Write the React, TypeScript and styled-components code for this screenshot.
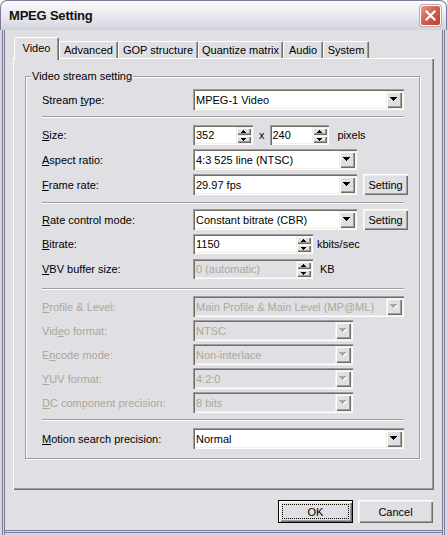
import React from "react";
import styled, { createGlobalStyle } from "styled-components";

const colors = {
    face: "#e0dfe3",
    light: "#f1efe2",
    hilight: "#ffffff",
    shadow: "#9d9da1",
    dkShadow: "#716f64",
    grayText: "#aca899",
    frameDark: "#7b7b98",
    frameLight: "#d6d6e2",
};

const GlobalStyle = createGlobalStyle`
    html, body {
        margin: 0;
        padding: 0;
        background: #ffffff;
    }
    body {
        font-family: "Liberation Sans", Arial, sans-serif;
        font-size: 11px;
        color: #000;
    }
`;

const Window = styled.div`
    width: 447px;
    height: 535px;
    display: flex;
    flex-direction: column;
`;

const TitleBar = styled.div`
    flex: 0 0 30px;
    display: flex;
    align-items: center;
    justify-content: space-between;
    box-sizing: border-box;
    padding: 0 5px 0 8px;
    border-radius: 7px 7px 0 0;
    border: 1px solid ${colors.frameDark};
    border-bottom: none;
    background: linear-gradient(#fcfcfd 0%, #eeeef3 35%, #e1e1e9 70%, #d2d2dd 100%);
`;

const Title = styled.span`
    font-size: 13px;
    font-weight: bold;
    color: #111;
    letter-spacing: -0.2px;
`;

const CloseButton = styled.div`
    width: 21px;
    height: 21px;
    box-sizing: border-box;
    display: flex;
    align-items: center;
    justify-content: center;
    border: 1px solid #fff;
    border-radius: 3px;
    background: linear-gradient(135deg, #e99a8c 0%, #d4604f 45%, #bf3f2f 100%);
    box-shadow: 0 0 0 1px #b7a9b8;
`;

const Client = styled.div`
    flex: 1 1 auto;
    display: flex;
    flex-direction: column;
    padding: 7px 13px 0 13px;
    background: ${colors.face};
    box-shadow:
        inset 2px 0 ${colors.frameLight},
        inset 3px 0 ${colors.frameDark},
        inset 4px 0 ${colors.frameLight},
        inset 5px 0 ${colors.frameDark},
        inset -2px 0 ${colors.frameLight},
        inset -3px 0 ${colors.frameDark},
        inset -4px 0 ${colors.frameLight},
        inset -5px 0 ${colors.frameDark},
        inset 0 -2px ${colors.frameLight},
        inset 0 -3px ${colors.frameDark},
        inset 0 -4px ${colors.frameLight},
        inset 0 -5px ${colors.frameDark};
`;

const TabStrip = styled.div`
    display: flex;
    align-items: flex-end;
    height: 21px;
    padding-left: 1px;
`;

const Tab = styled.div<{ $active?: boolean; $w: number }>`
    position: relative;
    z-index: ${props => (props.$active ? 1 : 0)};
    box-sizing: border-box;
    width: ${props => props.$w}px;
    height: ${props => (props.$active ? 23 : 17)}px;
    margin-bottom: ${props => (props.$active ? -2 : 0)}px;
    display: flex;
    align-items: center;
    justify-content: center;
    padding-bottom: ${props => (props.$active ? 2 : 0)}px;
    background: ${colors.face};
    border-top: 1px solid ${colors.hilight};
    border-left: 1px solid ${colors.hilight};
    border-right: 1px solid ${colors.dkShadow};
    border-radius: 2px 2px 0 0;
    box-shadow: inset -1px 0 ${colors.shadow};
`;

const Panel = styled.div`
    box-sizing: border-box;
    width: 421px;
    height: 432px;
    padding: 18px 14px 0 12px;
    box-shadow:
        inset 1px 1px ${colors.hilight},
        inset -1px -1px ${colors.dkShadow},
        inset -2px -2px ${colors.shadow};
`;

const GroupBox = styled.div`
    display: flex;
    flex-direction: column;
    align-items: flex-start;
    padding: 0 0 9px 16px;
    border: 1px solid ${colors.shadow};
    box-shadow: inset 1px 1px ${colors.hilight}, 1px 1px ${colors.hilight};
`;

const GroupTitle = styled.span`
    margin: -7px 0 0 -11px;
    padding: 0 1px;
    line-height: 13px;
    background: ${colors.face};
`;

const Row = styled.div<{ $mt: number; $h?: number }>`
    display: flex;
    align-items: center;
    height: ${props => props.$h ?? 21}px;
    margin-top: ${props => props.$mt}px;
`;

const Label = styled.span<{ $disabled?: boolean }>`
    flex: 0 0 151px;
    color: ${props => (props.$disabled ? colors.grayText : "#000")};
    white-space: nowrap;
`;

const Separator = styled.div<{ $mt: number }>`
    width: 362px;
    height: 1px;
    margin-top: ${props => props.$mt}px;
    background: ${colors.shadow};
    border-bottom: 1px solid ${colors.hilight};
`;

const Sunken = styled.div<{ $w: number; $h?: number; $disabled?: boolean }>`
    box-sizing: border-box;
    width: ${props => props.$w}px;
    height: ${props => props.$h ?? 21}px;
    display: flex;
    align-items: stretch;
    padding: 2px;
    background: ${props => (props.$disabled ? colors.face : "#fff")};
    box-shadow:
        inset 1px 1px ${colors.shadow},
        inset 2px 2px ${colors.dkShadow},
        inset -1px -1px ${colors.hilight},
        inset -2px -2px ${colors.light};
`;

const FieldText = styled.span<{ $disabled?: boolean }>`
    flex: 1 1 auto;
    display: flex;
    align-items: center;
    padding-left: 1px;
    color: ${props => (props.$disabled ? colors.grayText : "#000")};
    white-space: nowrap;
    overflow: hidden;
`;

const Raised = styled.div<{ $w: number }>`
    flex: 0 0 ${props => props.$w}px;
    display: flex;
    align-items: center;
    justify-content: center;
    background: ${colors.face};
    box-shadow:
        inset 1px 1px ${colors.light},
        inset 2px 2px ${colors.hilight},
        inset -1px -1px ${colors.dkShadow},
        inset -2px -2px ${colors.shadow};
`;

const SpinColumn = styled.div`
    flex: 0 0 15px;
    display: flex;
    flex-direction: column;

    & > div {
        flex: 1 1 0;
    }
`;

const Unit = styled.span<{ $ml: number }>`
    margin-left: ${props => props.$ml}px;
`;

const PushButton = styled.div<{ $w: number; $h: number; $default?: boolean }>`
    box-sizing: border-box;
    width: ${props => props.$w}px;
    height: ${props => props.$h}px;
    display: flex;
    align-items: center;
    justify-content: center;
    background: ${colors.face};
    border: ${props => (props.$default ? "1px solid #000" : "none")};
    box-shadow:
        inset 1px 1px ${colors.hilight},
        inset 2px 2px ${colors.light},
        inset -1px -1px ${colors.dkShadow},
        inset -2px -2px ${colors.shadow};
`;

const FocusRect = styled.span`
    box-sizing: border-box;
    flex: 1 1 auto;
    align-self: stretch;
    margin: 3px;
    display: flex;
    align-items: center;
    justify-content: center;
    outline: 1px dotted #000;
    outline-offset: -1px;
`;

const ButtonRow = styled.div`
    display: flex;
    justify-content: flex-end;
    gap: 5px;
    width: 421px;
    margin-top: 10px;
    padding-right: 1px;
    box-sizing: border-box;
`;

const DropArrow = ({ disabled }: { disabled?: boolean }) => (
    <svg width="8" height="5" viewBox="0 0 8 5" shapeRendering="crispEdges">
        {disabled && <path d="M1 1h7v1H1zM2 2h5v1H2zM3 3h3v1H3zM4 4h1v1H4z" fill="#fff" />}
        <path
            d="M0 0h7v1H0zM1 1h5v1H1zM2 2h3v1H2zM3 3h1v1H3z"
            fill={disabled ? colors.grayText : "#000"}
        />
    </svg>
);

const SpinArrow = ({ up }: { up?: boolean }) => (
    <svg width="5" height="3" viewBox="0 0 5 3" shapeRendering="crispEdges">
        <path
            d={up ? "M2 0h1v1H2zM1 1h3v1H1zM0 2h5v1H0z" : "M0 0h5v1H0zM1 1h3v1H1zM2 2h1v1H2z"}
            fill="#000"
        />
    </svg>
);

type ComboProps = { w: number; value: string; disabled?: boolean };

const Combo = ({ w, value, disabled }: ComboProps) => (
    <Sunken $w={w} $disabled={disabled}>
        <FieldText $disabled={disabled}>{value}</FieldText>
        <Raised $w={16}>
            <DropArrow disabled={disabled} />
        </Raised>
    </Sunken>
);

const SpinEdit = ({ w, value, disabled }: ComboProps) => (
    <Sunken $w={w} $h={20} $disabled={disabled}>
        <FieldText $disabled={disabled}>{value}</FieldText>
        <SpinColumn>
            <Raised $w={15}>
                <SpinArrow up />
            </Raised>
            <Raised $w={15}>
                <SpinArrow />
            </Raised>
        </SpinColumn>
    </Sunken>
);

const tabs = [
    { label: "Video", w: 45 },
    { label: "Advanced", w: 59 },
    { label: "GOP structure", w: 80 },
    { label: "Quantize matrix", w: 85 },
    { label: "Audio", w: 40 },
    { label: "System", w: 46 },
];

export default function App() {
    return (
        <>
            <GlobalStyle />
            <Window>
                <TitleBar>
                    <Title>MPEG Setting</Title>
                    <CloseButton>
                        <svg width="11" height="11" viewBox="0 0 11 11">
                            <path d="M1.5 1.5l8 8M9.5 1.5l-8 8" stroke="#fff" strokeWidth="2.2" strokeLinecap="square" />
                        </svg>
                    </CloseButton>
                </TitleBar>
                <Client>
                    <TabStrip>
                        {tabs.map((tab, index) => (
                            <Tab key={tab.label} $w={tab.w} $active={index === 0}>
                                {tab.label}
                            </Tab>
                        ))}
                    </TabStrip>
                    <Panel>
                        <GroupBox>
                            <GroupTitle>Video stream setting</GroupTitle>
                            <Row $mt={6}>
                                <Label>
                                    Stream <u>t</u>ype:
                                </Label>
                                <Combo w={211} value="MPEG-1 Video" />
                            </Row>
                            <Separator $mt={6} />
                            <Row $mt={7} $h={20}>
                                <Label>
                                    <u>S</u>ize:
                                </Label>
                                <SpinEdit w={60} value="352" />
                                <Unit $ml={6}>x</Unit>
                                <Unit $ml={5}>
                                    <SpinEdit w={59} value="240" />
                                </Unit>
                                <Unit $ml={9}>pixels</Unit>
                            </Row>
                            <Row $mt={4}>
                                <Label>
                                    <u>A</u>spect ratio:
                                </Label>
                                <Combo w={164} value="4:3 525 line (NTSC)" />
                            </Row>
                            <Row $mt={4}>
                                <Label>
                                    <u>F</u>rame rate:
                                </Label>
                                <Combo w={164} value="29.97 fps" />
                                <Unit $ml={6}>
                                    <PushButton $w={45} $h={21}>Setting</PushButton>
                                </Unit>
                            </Row>
                            <Separator $mt={7} />
                            <Row $mt={5}>
                                <Label>
                                    <u>R</u>ate control mode:
                                </Label>
                                <Combo w={164} value="Constant bitrate (CBR)" />
                                <Unit $ml={6}>
                                    <PushButton $w={45} $h={21}>Setting</PushButton>
                                </Unit>
                            </Row>
                            <Row $mt={4} $h={20}>
                                <Label>
                                    <u>B</u>itrate:
                                </Label>
                                <SpinEdit w={120} value="1150" />
                                <Unit $ml={4}>kbits/sec</Unit>
                            </Row>
                            <Row $mt={5} $h={20}>
                                <Label>
                                    <u>V</u>BV buffer size:
                                </Label>
                                <SpinEdit w={120} value="0 (automatic)" disabled />
                                <Unit $ml={7}>KB</Unit>
                            </Row>
                            <Separator $mt={9} />
                            <Row $mt={6}>
                                <Label $disabled>
                                    <u>P</u>rofile &amp; Level:
                                </Label>
                                <Combo w={211} value="Main Profile & Main Level (MP@ML)" disabled />
                            </Row>
                            <Row $mt={3}>
                                <Label $disabled>
                                    Vid<u>e</u>o format:
                                </Label>
                                <Combo w={160} value="NTSC" disabled />
                            </Row>
                            <Row $mt={3}>
                                <Label $disabled>
                                    E<u>n</u>code mode:
                                </Label>
                                <Combo w={160} value="Non-interlace" disabled />
                            </Row>
                            <Row $mt={3}>
                                <Label $disabled>
                                    <u>Y</u>UV format:
                                </Label>
                                <Combo w={160} value="4:2:0" disabled />
                            </Row>
                            <Row $mt={3}>
                                <Label $disabled>
                                    <u>D</u>C component precision:
                                </Label>
                                <Combo w={160} value="8 bits" disabled />
                            </Row>
                            <Separator $mt={6} />
                            <Row $mt={7}>
                                <Label>
                                    <u>M</u>otion search precision:
                                </Label>
                                <Combo w={211} value="Normal" />
                            </Row>
                        </GroupBox>
                    </Panel>
                    <ButtonRow>
                        <PushButton $w={75} $h={23} $default>
                            <FocusRect>OK</FocusRect>
                        </PushButton>
                        <PushButton $w={75} $h={23}>
                            Cancel
                        </PushButton>
                    </ButtonRow>
                </Client>
            </Window>
        </>
    );
}
